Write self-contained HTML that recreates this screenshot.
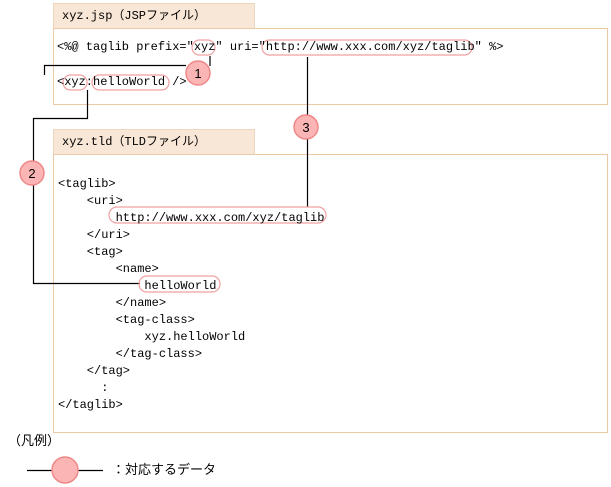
<!DOCTYPE html>
<html><head><meta charset="utf-8"><style>
body{margin:0;width:611px;height:487px;background:#fff;position:relative;overflow:hidden;font-family:"Liberation Mono","Noto Sans CJK JP",monospace;font-size:12px;color:#000}
.t{position:absolute;white-space:pre;line-height:14px}
.j{font-family:"Liberation Sans","Noto Sans CJK JP",sans-serif;font-size:13px}
svg{position:absolute;left:0;top:0}
</style></head><body>
<svg width="611" height="487">
<rect x="53.5" y="3.5" width="201" height="25" fill="#f8e6d6" stroke="#efd6bf"/>
<rect x="53.5" y="28.5" width="554" height="76" fill="#fff" stroke="#ecc9a6"/>
<rect x="53.5" y="129.5" width="201" height="25" fill="#f8e6d6" stroke="#efd6bf"/>
<rect x="53.5" y="154.5" width="554" height="278" fill="#fff" stroke="#ecc9a6"/>
<g stroke="#000" stroke-width="1.2" fill="none">
<polyline points="210,56 210,66"/>
<polyline points="186,65.5 44.5,65.5 44.5,75"/>
<polyline points="87.5,90 87.5,118.5 33.5,118.5 33.5,283.5 140,283.5"/>
<polyline points="307.5,57 307.5,207"/>
<line x1="27" y1="470.5" x2="103" y2="470.5"/>
</g>
<g fill="none" stroke="#f2a0a0" stroke-width="1.2">
<rect x="192" y="40" width="23" height="15" rx="7.5"/>
<rect x="262" y="40" width="210" height="15" rx="7.5"/>
<rect x="63" y="75" width="24" height="15" rx="7.5"/>
<rect x="92" y="75" width="77" height="15" rx="7.5"/>
<rect x="109" y="207" width="217" height="16" rx="8"/>
<rect x="139" y="276" width="81" height="16" rx="8"/>
</g>
<g fill="#fbb5b5" stroke="#ef8888" stroke-width="1.5">
<circle cx="198" cy="73" r="12"/>
<circle cx="306" cy="127" r="12"/>
<circle cx="32" cy="173" r="12"/>
<circle cx="65" cy="470" r="13"/>
</g>
<g font-family="Liberation Sans,sans-serif" font-size="13" text-anchor="middle" fill="#000">
<text x="198" y="78">1</text><text x="306" y="132">3</text><text x="32" y="178">2</text>
</g>
</svg>
<div class="t" style="left:62px;top:9px">xyz.jsp（JSPファイル）</div>
<div class="t" style="left:62px;top:135px">xyz.tld（TLDファイル）</div>
<div class="t" style="left:57px;top:40px">&lt;%@ taglib prefix="xyz" uri="http://www.xxx.com/xyz/taglib" %&gt;</div>
<div class="t" style="left:57px;top:75px">&lt;xyz:helloWorld /&gt;</div>
<div class="t" style="left:58px;top:176px;line-height:17px">&lt;taglib&gt;
    &lt;uri&gt;
        http://www.xxx.com/xyz/taglib
    &lt;/uri&gt;
    &lt;tag&gt;
        &lt;name&gt;
            helloWorld
        &lt;/name&gt;
        &lt;tag-class&gt;
            xyz.helloWorld
        &lt;/tag-class&gt;
    &lt;/tag&gt;
      :
&lt;/taglib&gt;</div>
<div class="t j" style="left:8px;top:434px">（凡例）</div>
<div class="t j" style="left:112px;top:463px">：対応するデータ</div>
</body></html>
